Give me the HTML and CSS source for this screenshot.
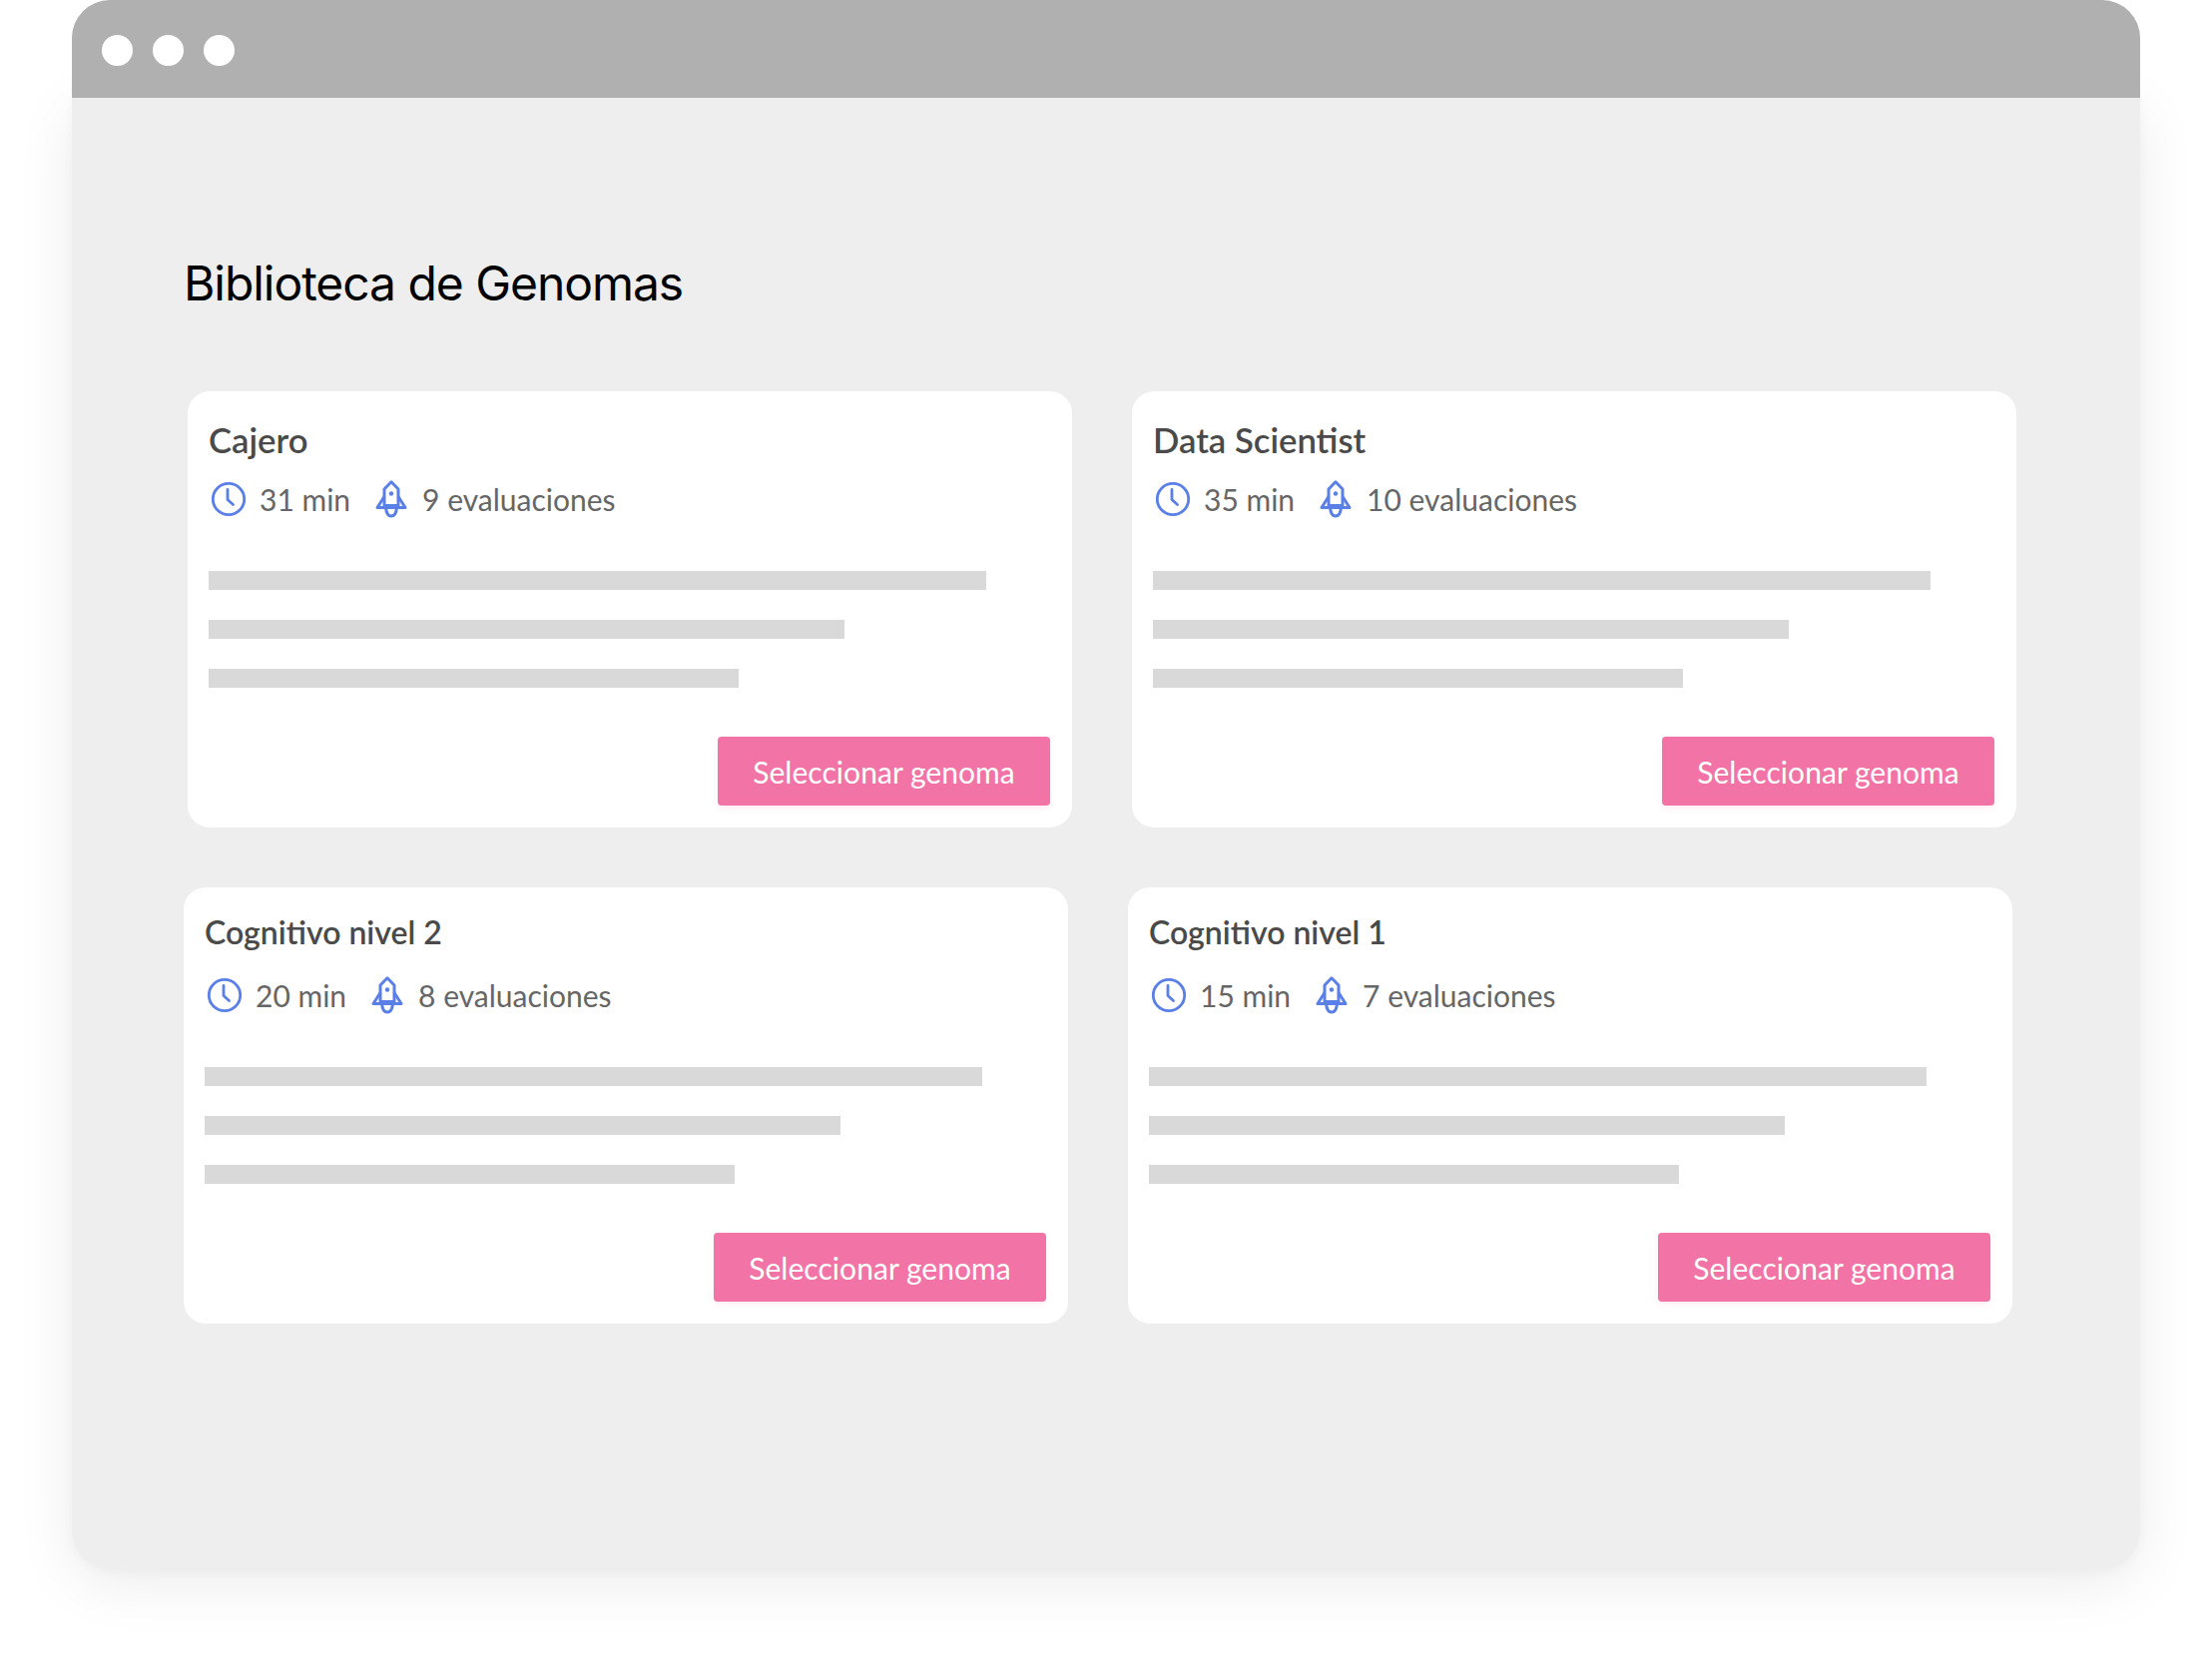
FILE: index.html
```html
<!DOCTYPE html>
<html lang="es">
<head>
<meta charset="utf-8">
<title>Biblioteca de Genomas</title>
<link rel="stylesheet" href="styles.css">
</head>
<body>
<svg class="defs" width="0" height="0" aria-hidden="true">
  <symbol id="clock" viewBox="0 0 36 36">
    <circle cx="18" cy="18" r="15.700" fill="none" stroke="currentColor" stroke-width="2.800"/>
    <path d="M17 8.500V18.500L22.500 23.500" fill="none" stroke="currentColor" stroke-width="2.800" stroke-linecap="round" stroke-linejoin="round"/>
  </symbol>
  <symbol id="rocket" viewBox="0 0 32 38">
    <path d="M16 1.800L23 9V25.500H9V9Z" fill="none" stroke="currentColor" stroke-width="3" stroke-linejoin="round"/>
    <path d="M9 16.500L2 27.500H30L23 16.500" fill="none" stroke="currentColor" stroke-width="3" stroke-linejoin="round"/>
    <path d="M10.500 27.500C11 33 13 36 16 36C19 36 21 33 21.500 27.500" fill="none" stroke="currentColor" stroke-width="3"/>
    <circle cx="16" cy="13.500" r="2.200" fill="currentColor"/>
  </symbol>
</svg>
<div class="window">
  <div class="titlebar">
    <span class="dot"></span><span class="dot"></span><span class="dot"></span>
  </div>
  <main class="content">
    <h1 class="page-title">Biblioteca de Genomas</h1>
    <div class="row row-top">
      <article class="card">
        <h2 class="card-title">Cajero</h2>
        <div class="meta">
          <svg class="ico-clock"><use href="#clock"/></svg><span class="meta-time">31 min</span>
          <svg class="ico-rocket"><use href="#rocket"/></svg><span>9 evaluaciones</span>
        </div>
        <div class="bars"><i class="bar b1"></i><i class="bar b2"></i><i class="bar b3"></i></div>
        <button class="select">Seleccionar genoma</button>
      </article>
      <article class="card">
        <h2 class="card-title">Data Scientist</h2>
        <div class="meta">
          <svg class="ico-clock"><use href="#clock"/></svg><span class="meta-time">35 min</span>
          <svg class="ico-rocket"><use href="#rocket"/></svg><span>10 evaluaciones</span>
        </div>
        <div class="bars"><i class="bar b1"></i><i class="bar b2"></i><i class="bar b3"></i></div>
        <button class="select">Seleccionar genoma</button>
      </article>
    </div>
    <div class="row row-bottom">
      <article class="card card-low">
        <h2 class="card-title">Cognitivo nivel 2</h2>
        <div class="meta">
          <svg class="ico-clock"><use href="#clock"/></svg><span class="meta-time">20 min</span>
          <svg class="ico-rocket"><use href="#rocket"/></svg><span>8 evaluaciones</span>
        </div>
        <div class="bars"><i class="bar b1"></i><i class="bar b2"></i><i class="bar b3"></i></div>
        <button class="select">Seleccionar genoma</button>
      </article>
      <article class="card card-low">
        <h2 class="card-title">Cognitivo nivel 1</h2>
        <div class="meta">
          <svg class="ico-clock"><use href="#clock"/></svg><span class="meta-time">15 min</span>
          <svg class="ico-rocket"><use href="#rocket"/></svg><span>7 evaluaciones</span>
        </div>
        <div class="bars"><i class="bar b1"></i><i class="bar b2"></i><i class="bar b3"></i></div>
        <button class="select">Seleccionar genoma</button>
      </article>
    </div>
  </main>
</div>
</body>
</html>
```
FILE: styles.css
```css
* { box-sizing: border-box; }
html, body { margin: 0; padding: 0; background: #fff; }
body { width: 2216px; height: 1662px; overflow: hidden; padding-left: 72px; font-family: "Lato", sans-serif; }
.defs { display: block; height: 0; }
.window { width: 2072px; height: 1572px; display: flex; flex-direction: column; border-radius: 38px; }
.titlebar { height: 98px; background: #b0b0b0; border-radius: 38px 38px 0 0; display: flex; align-items: center; gap: 20px; padding: 2px 0 0 30px; position: relative; z-index: 1; }
.dot { width: 31px; height: 31px; border-radius: 50%; background: #fff; }
.content { flex: 1; background: #eeeeee; border-radius: 0 0 38px 38px; box-shadow: 0 14px 60px rgba(0,0,0,.08), 0 3px 12px rgba(0,0,0,.03); padding: 156px 0 0 112px; }
.page-title { margin: 0 0 79px; height: 59px; font: 400 48px/59px "Inter", sans-serif; color: #000; letter-spacing: -1.050px; }
.row { display: flex; gap: 60px; }
.row-top { padding-left: 4px; margin-bottom: 60px; }
.card { width: 886px; height: 437px; background: #fff; border-radius: 22px; padding: 28px 22px 22px 21px; display: flex; flex-direction: column; }
.card-low { padding-top: 24px; }
.card-title { margin: 0; font: 600 34.700px/42px "Lato", sans-serif; color: #4a4a4a; }
.card-low .card-title { font-size: 32px; }
.meta { display: flex; align-items: center; margin-top: 16px; height: 44px; font-size: 30px; color: #666; }
.card-low .meta { margin-top: 20px; }
.ico-clock { width: 36px; height: 36px; color: #5a7fe6; margin: 0 13px 0 2px; flex: none; }
.ico-rocket { width: 32px; height: 38px; color: #5a7fe6; margin: 0 15px 0 25px; flex: none; }
.bars { display: flex; flex-direction: column; gap: 30px; margin-top: 50px; }
.bar { display: block; height: 19px; background: #d9d9d9; }
.b1 { width: 779px; }
.b2 { width: 637px; }
.b3 { width: 531px; }
.select { align-self: flex-end; margin-top: auto; width: 333px; height: 69.500px; padding: 1px 0 0; border: 0; border-radius: 4px; background: #f273a6; color: #fff; font: 400 30px/1 "Lato", sans-serif; letter-spacing: .050px; box-shadow: 0 3px 6px rgba(242,115,166,.12); }
```
